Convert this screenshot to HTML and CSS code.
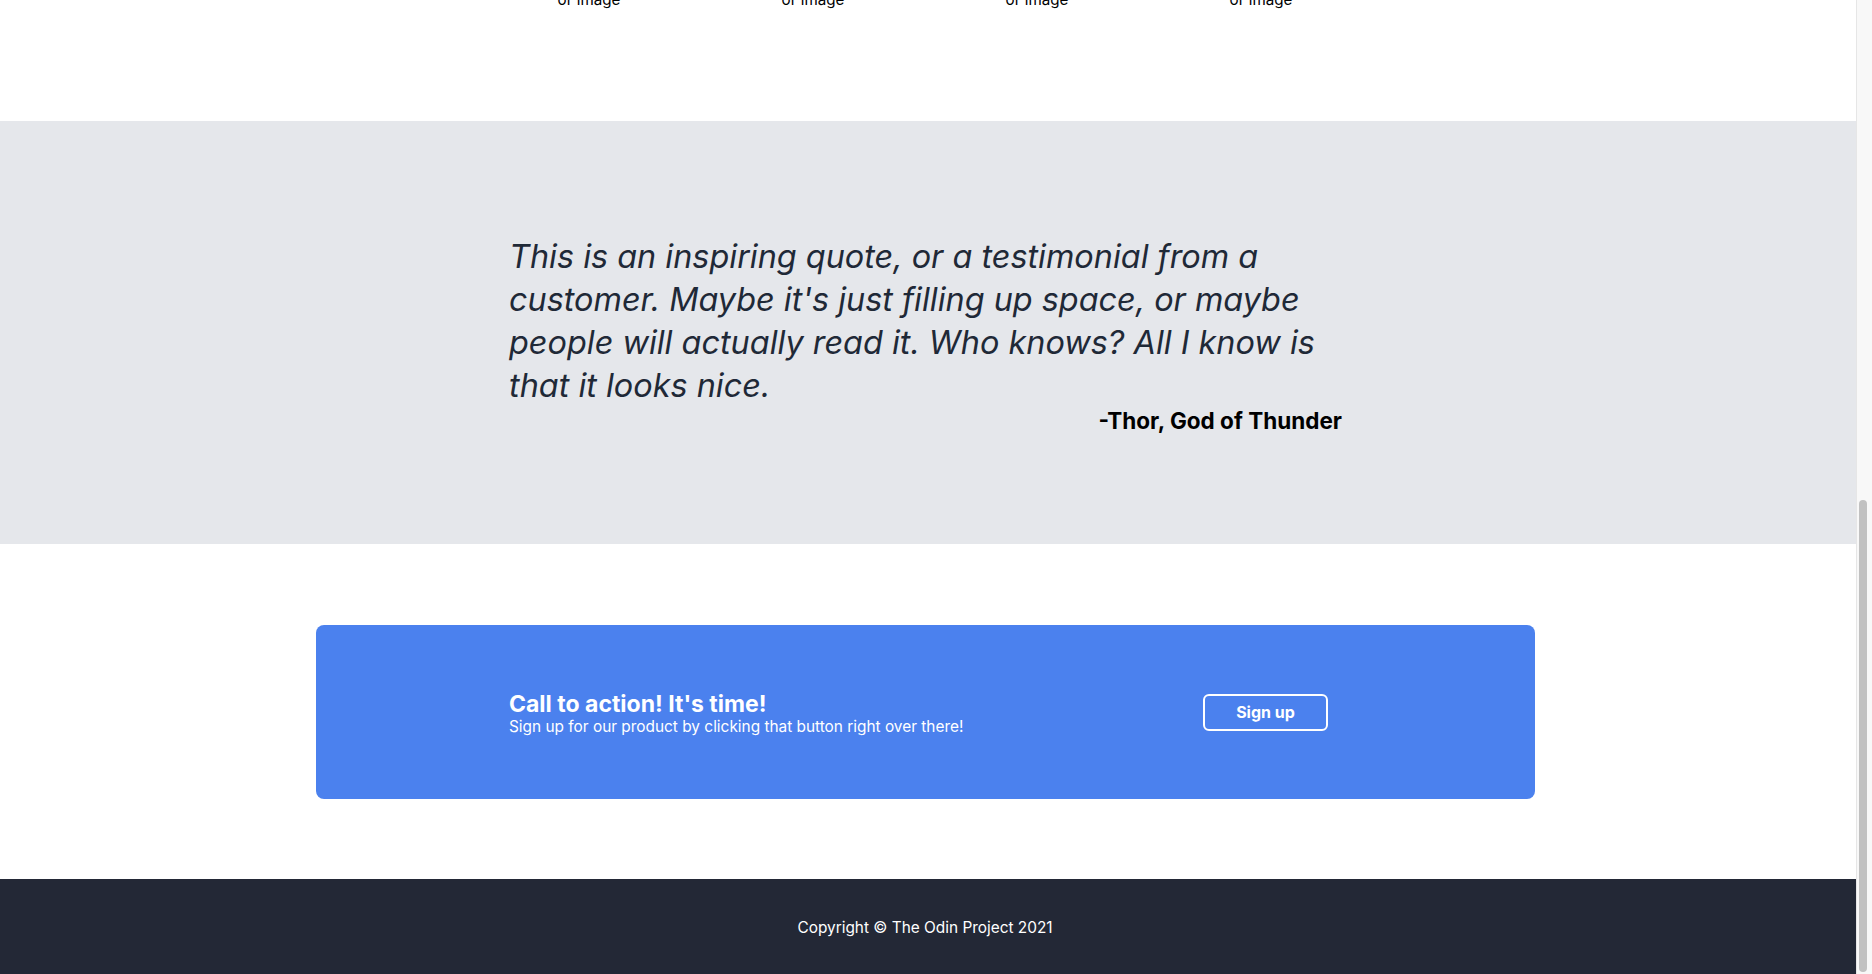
FILE: index.html
```html
<!DOCTYPE html>
<html lang="en">
<head>
<meta charset="utf-8">
<title>Landing page</title>
<link rel="stylesheet" href="styles.css">
</head>
<body>
<div class="page">
  <div class="main">
    <section class="features">
      <div class="feature">or image</div>
      <div class="feature">or image</div>
      <div class="feature">or image</div>
      <div class="feature">or image</div>
    </section>
    <section class="quote-section">
      <div class="quote-box">
        <p class="quote">This is an inspiring quote, or a testimonial from a customer. Maybe it's just filling up space, or maybe people will actually read it. Who knows? All I know is that it looks nice.</p>
        <p class="author">-Thor, God of Thunder</p>
      </div>
    </section>
    <section class="cta-section">
      <div class="cta">
        <div class="cta-text">
          <h2 class="cta-title">Call to action! It's time!</h2>
          <p class="cta-sub">Sign up for our product by clicking that button right over there!</p>
        </div>
        <button class="cta-button">Sign up</button>
      </div>
    </section>
    <footer class="footer">Copyright © The Odin Project 2021</footer>
  </div>
  <div class="scrollbar"><div class="thumb"></div></div>
</div>
</body>
</html>
```

FILE: styles.css
```css
* { box-sizing: border-box; }
html, body { margin: 0; padding: 0; height: 100%; overflow: hidden; }
body { font-family: Inter, "Noto Sans", sans-serif; color: #000; background: #fff; }

.page { display: flex; height: 974px; }
.main { width: 1856px; flex: none; display: flex; flex-direction: column; }

.features {
  height: 121px;
  overflow: hidden;
  display: flex;
  align-items: flex-start;
  padding-left: 477px;
  background: #fff;
}
.feature {
  width: 224px;
  flex: none;
  text-align: center;
  font-size: 15.2px;
  line-height: 20px;
  margin-top: -10px;
  white-space: nowrap;
}

.quote-section {
  background: #e5e7eb;
  height: 423px;
  padding-top: 114px;
}
.quote-box { margin-left: 509px; width: 833px; }
.quote {
  margin: 0;
  font-size: 32.4px;
  line-height: 43px;
  font-style: italic;
  color: #1f2937;
}
.author {
  margin: 0;
  text-align: right;
  font-size: 22.5px;
  line-height: 27px;
  font-weight: 700;
  color: #000;
}

.cta-section { height: 335px; padding-top: 81px; }
.cta {
  margin-left: 316px;
  width: 1219px;
  height: 174px;
  background: #4b81ee;
  border-radius: 8px;
  display: flex;
  align-items: center;
  justify-content: space-between;
  padding: 0 207px 0 193px;
  color: #fff;
}
.cta-text { padding-top: 3px; }
.cta-title { margin: 0 0 1px; font-size: 23px; line-height: 25px; font-weight: 700; }
.cta-sub { margin: 0; font-size: 15.4px; line-height: 18px; }
.cta-button {
  width: 125px;
  height: 37px;
  background: transparent;
  border: 2px solid #fff;
  border-radius: 6px;
  color: #fff;
  font-family: Inter, "Noto Sans", sans-serif;
  font-size: 16px;
  font-weight: 700;
  padding: 0;
}

.footer {
  flex: 1;
  background: #232836;
  color: #fff;
  text-align: center;
  font-size: 15.4px;
  line-height: 24px;
  padding: 37px 6px 0 0;
}

.scrollbar {
  width: 16px;
  flex: none;
  background: #f8f8f8;
  border-left: 1px solid #e6e6e6;
  padding: 500px 0 2px 2px;
}
.thumb { width: 8px; height: 472px; background: #c1c1c1; border-radius: 4px; }
```
